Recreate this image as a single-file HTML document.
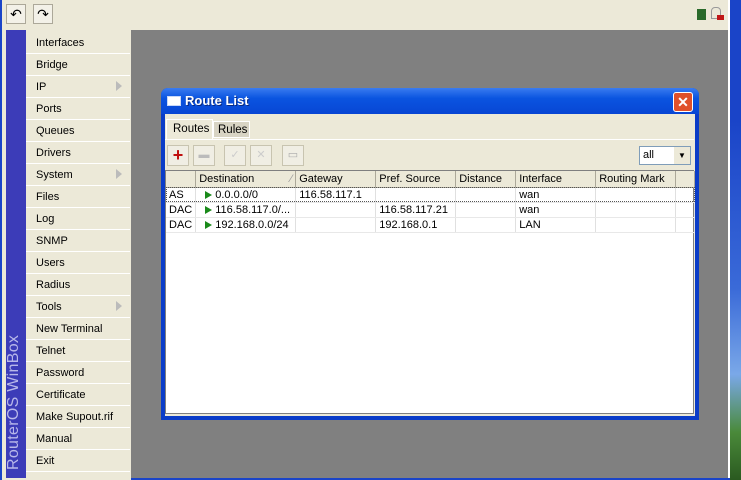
<!DOCTYPE html>
<html><head><style>
*{margin:0;padding:0;box-sizing:border-box}
body{width:741px;height:480px;overflow:hidden;background:#ece9d8;font-family:"Liberation Sans",sans-serif;font-size:11px;position:relative}
.abs{position:absolute}
.btn{position:absolute;width:20px;height:20px;border:1px solid #aca899;background:#f3f1e8;}
.menu div{height:22px;line-height:22px;padding-left:10px;border-bottom:1px solid #fff;font-size:11px;position:relative}
.arrow{position:absolute;right:8px;top:5px;width:0;height:0;border-left:6px solid #bbb;border-top:5px solid transparent;border-bottom:5px solid transparent}
table{border-collapse:collapse;font-size:11px;width:529px}
td{height:15px;padding:0 3px;border-right:1px solid #e0e0e0;border-bottom:1px solid #e8e8e8;white-space:nowrap}
th{height:16px;font-weight:normal;text-align:left;padding:0 3px;background:#ece9d8;border-right:1px solid #aca899;border-bottom:1px solid #aca899}
.tri{display:inline-block;width:0;height:0;border-left:7px solid #1a8a1a;border-top:4px solid transparent;border-bottom:4px solid transparent;margin:0 3px 0 6px;vertical-align:-1px}
.tb{position:absolute;top:145px;width:22px;height:21px;border:1px solid #c8c4b0;background:#f0eee4}
</style></head><body>
<div class="abs" style="left:0;top:0;width:2px;height:480px;background:#1a44c8"></div>
<div class="btn" style="left:6px;top:4px;font-size:14px;text-align:center;line-height:18px">↶</div>
<div class="btn" style="left:33px;top:4px;font-size:14px;text-align:center;line-height:18px">↷</div>
<div class="abs" style="left:697px;top:9px;width:9px;height:11px;background:#2a6a2a"></div>
<div class="abs" style="left:711px;top:7px;width:10px;height:12px;border:1px solid #999;border-radius:4px 4px 0 0"></div>
<div class="abs" style="left:717px;top:15px;width:7px;height:5px;background:#c01818"></div>
<div class="abs" style="left:6px;top:30px;width:20px;height:448px;background:#3c3cb8"></div>
<div class="abs" style="left:5px;top:470px;color:#b8b8ea;font-size:16px;transform:rotate(-90deg);transform-origin:0 0;white-space:nowrap;width:170px;letter-spacing:0.3px">RouterOS WinBox</div>
<div class="abs menu" style="left:26px;top:32px;width:104px">
<div>Interfaces</div><div>Bridge</div><div>IP<span class="arrow"></span></div><div>Ports</div><div>Queues</div><div>Drivers</div><div>System<span class="arrow"></span></div><div>Files</div><div>Log</div><div>SNMP</div><div>Users</div><div>Radius</div><div>Tools<span class="arrow"></span></div><div>New Terminal</div><div>Telnet</div><div>Password</div><div>Certificate</div><div>Make Supout.rif</div><div>Manual</div><div>Exit</div>
</div>
<div class="abs" style="left:131px;top:30px;width:597px;height:448px;background:#808080"></div>
<div class="abs" style="left:728px;top:0;width:2px;height:480px;background:#fff"></div>
<div class="abs" style="left:730px;top:0;width:11px;height:480px;background:linear-gradient(#1a44c8 0,#1a44c8 25%,#3a6ad8 60%,#7aa8e8 78%,#4a8a3a 90%,#2a5a20)"></div>
<div class="abs" style="left:131px;top:478px;width:599px;height:2px;background:#1a44c8"></div>
<!-- window -->
<div class="abs" style="left:161px;top:88px;width:538px;height:332px;background:#0a3cc8;border-radius:7px 7px 0 0;padding:0 4px 4px 4px">
<div style="height:26px;background:linear-gradient(#3a7cf0,#0a54e0 40%,#0846d4);margin:0 -4px;border-radius:7px 7px 0 0;position:relative">
<div class="abs" style="left:6px;top:8px;width:14px;height:10px;background:#fff;border:1px solid #c8d8f8"></div>
<div class="abs" style="left:24px;top:5px;color:#fff;font-weight:bold;font-size:13px;text-shadow:1px 1px #0a2a80">Route List</div>
<div class="abs" style="right:6px;top:4px;width:20px;height:20px;background:#e0502a;border:1px solid #fff;border-radius:3px;color:#fff;font-weight:bold;text-align:center;line-height:18px;font-size:14px">✕</div>
</div>
<div style="background:#ece9d8;height:302px;position:relative">
</div></div>
<div class="abs" style="left:166px;top:119px;width:47px;height:21px;border:1px solid #fff;border-bottom:none;padding:3px 0 0 6px;font-size:11.5px;background:#ece9d8">Routes</div>
<div class="abs" style="left:213px;top:121px;width:37px;height:17px;background:#d8d4c4;border:1px solid #fff;padding:2px 0 0 4px;font-size:11.5px">Rules</div>
<div class="abs" style="left:165px;top:139px;width:529px;height:1px;background:#fff"></div>
<div class="tb" style="left:167px;color:#c01010;font-weight:bold;font-size:18px;text-align:center;line-height:18px">+</div>
<div class="tb" style="left:193px;color:#bbb;text-align:center;line-height:18px">▬</div>
<div class="tb" style="left:224px;color:#ccc;text-align:center;line-height:18px">✓</div>
<div class="tb" style="left:250px;color:#ccc;text-align:center;line-height:18px">✕</div>
<div class="tb" style="left:282px;color:#aaa;text-align:center;line-height:18px">▭</div>
<div class="abs" style="left:639px;top:146px;width:52px;height:19px;background:#fff;border:1px solid #7f9db9;padding:2px 3px">all</div>
<div class="abs" style="left:674px;top:147px;width:16px;height:17px;background:#ece9d8;font-size:8px;text-align:center;line-height:17px">▼</div>
<div class="abs" style="left:165px;top:170px;width:529px;height:244px;background:#fff;border:1px solid #7f7f7f">
<table>
<tr><th style="width:28px"></th><th style="width:100px">Destination <span style="float:right;color:#999">⁄</span></th><th style="width:80px">Gateway</th><th style="width:80px">Pref. Source</th><th style="width:60px">Distance</th><th style="width:80px">Interface</th><th style="width:80px">Routing Mark</th><th></th></tr>
<tr style="outline:1px dotted #555;outline-offset:-1px"><td>AS</td><td><span class="tri"></span>0.0.0.0/0</td><td>116.58.117.1</td><td></td><td></td><td>wan</td><td></td><td></td></tr>
<tr><td>DAC</td><td><span class="tri"></span>116.58.117.0/...</td><td></td><td>116.58.117.21</td><td></td><td>wan</td><td></td><td></td></tr>
<tr><td>DAC</td><td><span class="tri"></span>192.168.0.0/24</td><td></td><td>192.168.0.1</td><td></td><td>LAN</td><td></td><td></td></tr>
</table>
</div>
</body></html>
